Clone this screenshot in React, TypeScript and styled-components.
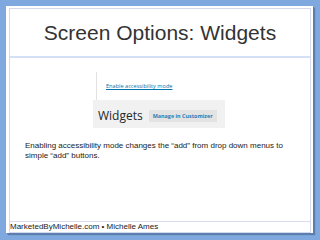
import styled, { createGlobalStyle } from "styled-components"

const GlobalStyle = createGlobalStyle`
  html, body {
    margin: 0;
    padding: 0;
    background: #7fa8de;
  }
  body {
    width: 320px;
    height: 240px;
    overflow: hidden;
    font-family: "Liberation Sans", Arial, sans-serif;
  }
`

const Stage = styled.div`
  width: 320px;
  height: 240px;
  box-sizing: border-box;
  padding: 6px 0 0 6px;
`

const Slide = styled.div`
  width: 307px;
  height: 227px;
  box-sizing: border-box;
  padding: 2px 2px 0 3px;
  background: #ffffff;
  box-shadow: 1px 1px 0 #5b7db0, 2px 2px 1px rgba(30, 50, 90, 0.35);
`

const Frame = styled.div`
  height: 225px;
  box-sizing: border-box;
  border: 1px solid #d5d9ee;
  display: flex;
  flex-direction: column;
`

const TitleBar = styled.div`
  height: 47px;
  display: flex;
  align-items: center;
  justify-content: center;
  border-bottom: 2px solid #d3e0f5;
`

const Title = styled.h1`
  margin: 0;
  font-family: "Liberation Sans", Arial, sans-serif;
  font-weight: 400;
  font-size: 21px;
  color: #333333;
`

const Shot = styled.div`
  margin: 14px 0 0 83px;
  width: 132px;
  display: flex;
  flex-direction: column;
`

const OptionsCard = styled.div`
  margin-left: 3px;
  width: 127px;
  height: 28px;
  box-sizing: border-box;
  border-left: 1px solid #e2e2e2;
  display: flex;
  align-items: center;
  padding-left: 9px;
`

const Link = styled.a`
  font-family: "Open Sans", sans-serif;
  font-size: 5.6px;
  color: #0073aa;
  text-decoration: underline;
`

const HeaderStrip = styled.div`
  height: 28px;
  box-sizing: border-box;
  background: #f1f1f1;
  display: flex;
  align-items: center;
  padding: 3px 0 0 5px;
  gap: 6px;
`

const Heading = styled.span`
  font-family: "Open Sans", sans-serif;
  font-size: 12px;
  color: #23282d;
`

const Button = styled.span`
  height: 12px;
  display: flex;
  align-items: center;
  padding: 0 4px;
  background: #e3e3e3;
  font-family: "Open Sans", sans-serif;
  font-weight: 700;
  font-size: 5.4px;
  color: #2e7bb4;
`

const Body = styled.p`
  margin: 13px 0 0 15px;
  font-size: 8px;
  line-height: 10px;
  color: #222222;
  width: 270px;
`

const Footer = styled.div`
  margin-top: auto;
  border-top: 1px solid #d9dcef;
  font-size: 8px;
  line-height: 10px;
  color: #222222;
`

export default function App() {
  return (
    <>
      <GlobalStyle />
      <Stage>
        <Slide>
          <Frame>
            <TitleBar>
              <Title>Screen Options: Widgets</Title>
            </TitleBar>
            <Shot>
              <OptionsCard>
                <Link>Enable accessibility mode</Link>
              </OptionsCard>
              <HeaderStrip>
                <Heading>Widgets</Heading>
                <Button>Manage in Customizer</Button>
              </HeaderStrip>
            </Shot>
            <Body>
              Enabling accessibility mode changes the “add” from drop down menus to simple “add” buttons.
            </Body>
            <Footer>MarketedByMichelle.com • Michelle Ames</Footer>
          </Frame>
        </Slide>
      </Stage>
    </>
  )
}
